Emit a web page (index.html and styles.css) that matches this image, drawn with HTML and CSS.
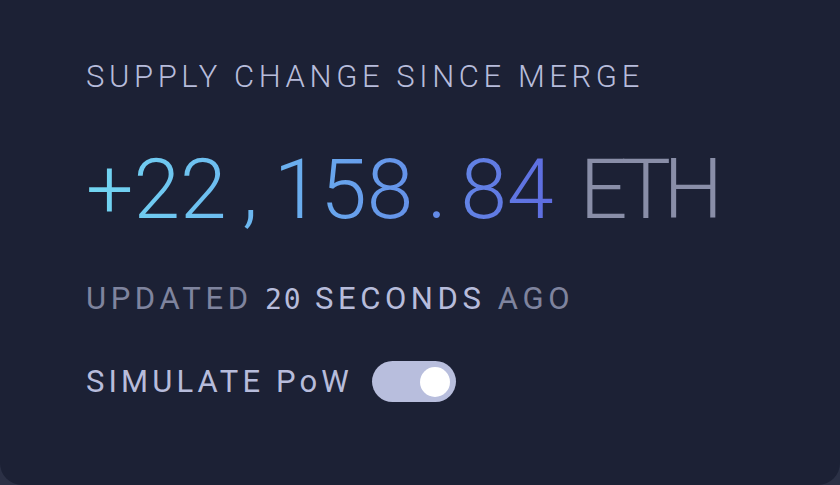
FILE: index.html
```html
<!DOCTYPE html>
<html>
<head>
<meta charset="utf-8">
<link rel="stylesheet" href="styles.css">
</head>
<body>
<div class="card">
  <div class="title">SUPPLY CHANGE SINCE MERGE</div>
  <div class="amount">
    <span class="num">+22<span class="punct">,</span>158<span class="punct">.</span>84</span>
    <span class="unit">ETH</span>
  </div>
  <div class="updated">
    <span class="dim">UPDATED</span> <span class="mono">20</span> <span class="bright">SECONDS</span> <span class="dim">AGO</span>
  </div>
  <div class="sim">
    <span class="sim-label">SIMULATE PoW</span>
    <span class="toggle"><span class="knob"></span></span>
  </div>
</div>
</body>
</html>
```
FILE: styles.css
```css
html, body {
  margin: 0;
  padding: 0;
}
body {
  width: 840px;
  height: 485px;
  background: #2b3045;
  font-family: Roboto, "Noto Sans", sans-serif;
  overflow: hidden;
}
.card {
  box-sizing: border-box;
  width: 840px;
  height: 485px;
  background: #1c2135;
  border-radius: 0 0 22px 22px;
  padding: 58px 0 0 86px;
}
.title {
  font-size: 31px;
  font-weight: 300;
  letter-spacing: 4.6px;
  color: #b7bcdb;
  line-height: 38px;
  white-space: nowrap;
}
.amount {
  margin-top: 44px;
  font-size: 84px;
  font-weight: 300;
  line-height: 100px;
  display: flex;
  gap: 26px;
  white-space: nowrap;
}
.num {
  font-variant-numeric: tabular-nums;
  background: linear-gradient(90deg, #72d7f2 0%, #69a9ee 50%, #5e6ce0 100%);
  -webkit-background-clip: text;
  background-clip: text;
  color: transparent;
}
.punct {
  display: inline-block;
  width: 47px;
  text-align: center;
}
.unit {
  color: #898ea8;
  letter-spacing: -7.5px;
}
.updated {
  margin-top: 41px;
  font-size: 31px;
  font-weight: 400;
  letter-spacing: 4.6px;
  line-height: 36px;
  white-space: nowrap;
}
.dim { color: #7f849e; }
.bright { color: #b7bcdb; }
.mono {
  color: #b7bcdb;
  font-family: "DejaVu Sans Mono", monospace;
  font-size: 28px;
  letter-spacing: 2px;
}
.sim {
  margin-top: 43px;
  display: flex;
  align-items: center;
  gap: 19px;
}
.sim-label {
  font-size: 31px;
  font-weight: 400;
  letter-spacing: 4.1px;
  color: #b7bcdb;
  line-height: 36px;
  white-space: nowrap;
}
.toggle {
  box-sizing: border-box;
  width: 84px;
  height: 41px;
  border-radius: 21px;
  background: #b8bedd;
  display: flex;
  align-items: center;
  justify-content: flex-end;
  padding-right: 6px;
}
.knob {
  width: 30px;
  height: 30px;
  border-radius: 50%;
  background: #ffffff;
}
```
